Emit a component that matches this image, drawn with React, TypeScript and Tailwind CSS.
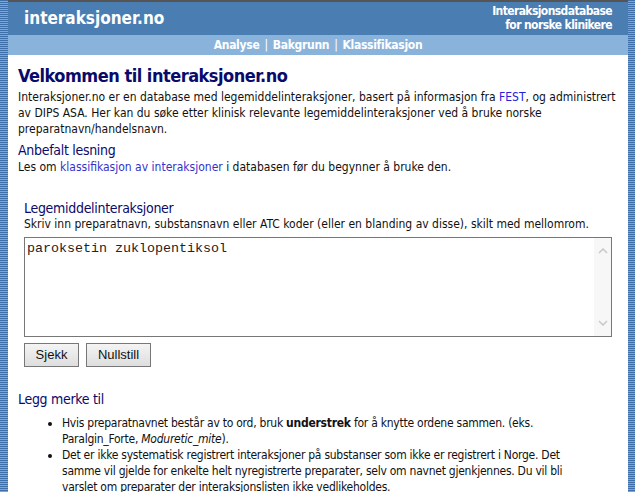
import React from "react";

const stripe =
  "bg-[repeating-linear-gradient(180deg,#3f6fa8_0px,#3f6fa8_1px,#7fa6d2_1px,#7fa6d2_2px)]";

const App: React.FC = () => {
  return (
    <div
      className="flex w-[635px] h-[492px] overflow-hidden bg-white text-[12px] leading-4 text-[#111]"
      style={{ fontFamily: '"DejaVu Sans Condensed", "DejaVu Sans", sans-serif' }}
    >
      <div className={`w-[8px] shrink-0 ${stripe}`} />

      <div className="flex-1 flex flex-col min-w-0">
        {/* Header */}
        <div className="h-[2px] shrink-0 bg-[#555]" />
        <div className="h-[33px] shrink-0 bg-[#4a7db1] flex items-start justify-between pl-[16px] pr-[16px]">
          <div className="text-white font-bold text-[17px] leading-[20px] mt-[6px]">interaksjoner.no</div>
          <div className="text-white font-bold text-[12px] leading-[14px] tracking-[-0.6px] text-right mt-[2px]">
            <div>Interaksjonsdatabase</div>
            <div>for norske klinikere</div>
          </div>
        </div>
        <div className="h-[20px] shrink-0 bg-[#8ab3dc] flex items-center justify-center gap-[5px] text-white font-bold text-[12px] tracking-[-0.3px]">
          <span>Analyse</span>
          <span className="font-normal">|</span>
          <span>Bakgrunn</span>
          <span className="font-normal">|</span>
          <span>Klassifikasjon</span>
        </div>

        {/* Content */}
        <div className="px-[10px] pt-[9px] shrink-0">
          <h1 className="text-[18px] leading-[24px] font-bold tracking-[-0.5px] text-[#0a0a6a]">
            Velkommen til interaksjoner.no
          </h1>
          <p className="mt-[1px]">
            Interaksjoner.no er en database med legemiddelinteraksjoner, basert på informasjon fra{" "}
            <span className="text-[#2222dd]">FEST</span>, og administrert av DIPS ASA. Her kan du søke etter klinisk
            relevante legemiddelinteraksjoner ved å bruke norske preparatnavn/handelsnavn.
          </p>

          <h2 className="mt-[4px] text-[14px] leading-[18px] tracking-[-0.3px] text-[#0a0a6a]">Anbefalt lesning</h2>
          <p>
            Les om <span className="text-[#3333cc]">klassifikasjon av interaksjoner</span> i databasen før du begynner å
            bruke den.
          </p>

          <div className="mt-[25px] px-[6px]">
            <h3 className="text-[14px] leading-[16px] tracking-[-0.3px] text-[#0a0a6a]">Legemiddelinteraksjoner</h3>
            <p>Skriv inn preparatnavn, substansnavn eller ATC koder (eller en blanding av disse), skilt med mellomrom.</p>
            <div className="mt-[5px] h-[100px] border border-[#777] flex">
              <div
                className="flex-1 px-[2px] pt-[3px] text-[13.33px] text-[#222]"
                style={{ fontFamily: '"Liberation Mono", monospace' }}
              >
                paroksetin zuklopentiksol
              </div>
              <div className="w-[17px] bg-[#f7f7f7] flex flex-col items-center justify-between py-[10px]">
                <svg width="10" height="6" viewBox="0 0 10 6">
                  <path d="M1 5 L5 1 L9 5" fill="none" stroke="#c8c8c8" strokeWidth="1.5" />
                </svg>
                <svg width="10" height="6" viewBox="0 0 10 6">
                  <path d="M1 1 L5 5 L9 1" fill="none" stroke="#c8c8c8" strokeWidth="1.5" />
                </svg>
              </div>
            </div>
            <div
              className="mt-[6px] flex gap-[7px] text-[13px]"
              style={{ fontFamily: '"Liberation Sans", Arial, sans-serif' }}
            >
              <button className="h-[24px] w-[55px] border border-[#777] bg-gradient-to-b from-[#f4f4f4] to-[#dedede]">
                Sjekk
              </button>
              <button className="h-[24px] w-[65px] border border-[#777] bg-gradient-to-b from-[#f4f4f4] to-[#dedede]">
                Nullstill
              </button>
            </div>
          </div>

          <h2 className="mt-[23px] text-[14px] leading-[18px] tracking-[-0.3px] text-[#0a0a6a]">Legg merke til</h2>
          <ul className="mt-[7px] pl-[44px] pr-[20px] list-disc tracking-[-0.25px]">
            <li>
              Hvis preparatnavnet består av to ord, bruk <b>understrek</b> for å knytte ordene sammen. (eks.
              Paralgin_Forte, <i>Moduretic_mite</i>).
            </li>
            <li>
              Det er ikke systematisk registrert interaksjoner på substanser som ikke er registrert i Norge. Det samme
              vil gjelde for enkelte helt nyregistrerte preparater, selv om navnet gjenkjennes. Du vil bli varslet om
              preparater der interaksjonslisten ikke vedlikeholdes.
            </li>
          </ul>
        </div>
      </div>

      <div className={`w-[7px] shrink-0 ${stripe}`} />
    </div>
  );
};

export default App;
